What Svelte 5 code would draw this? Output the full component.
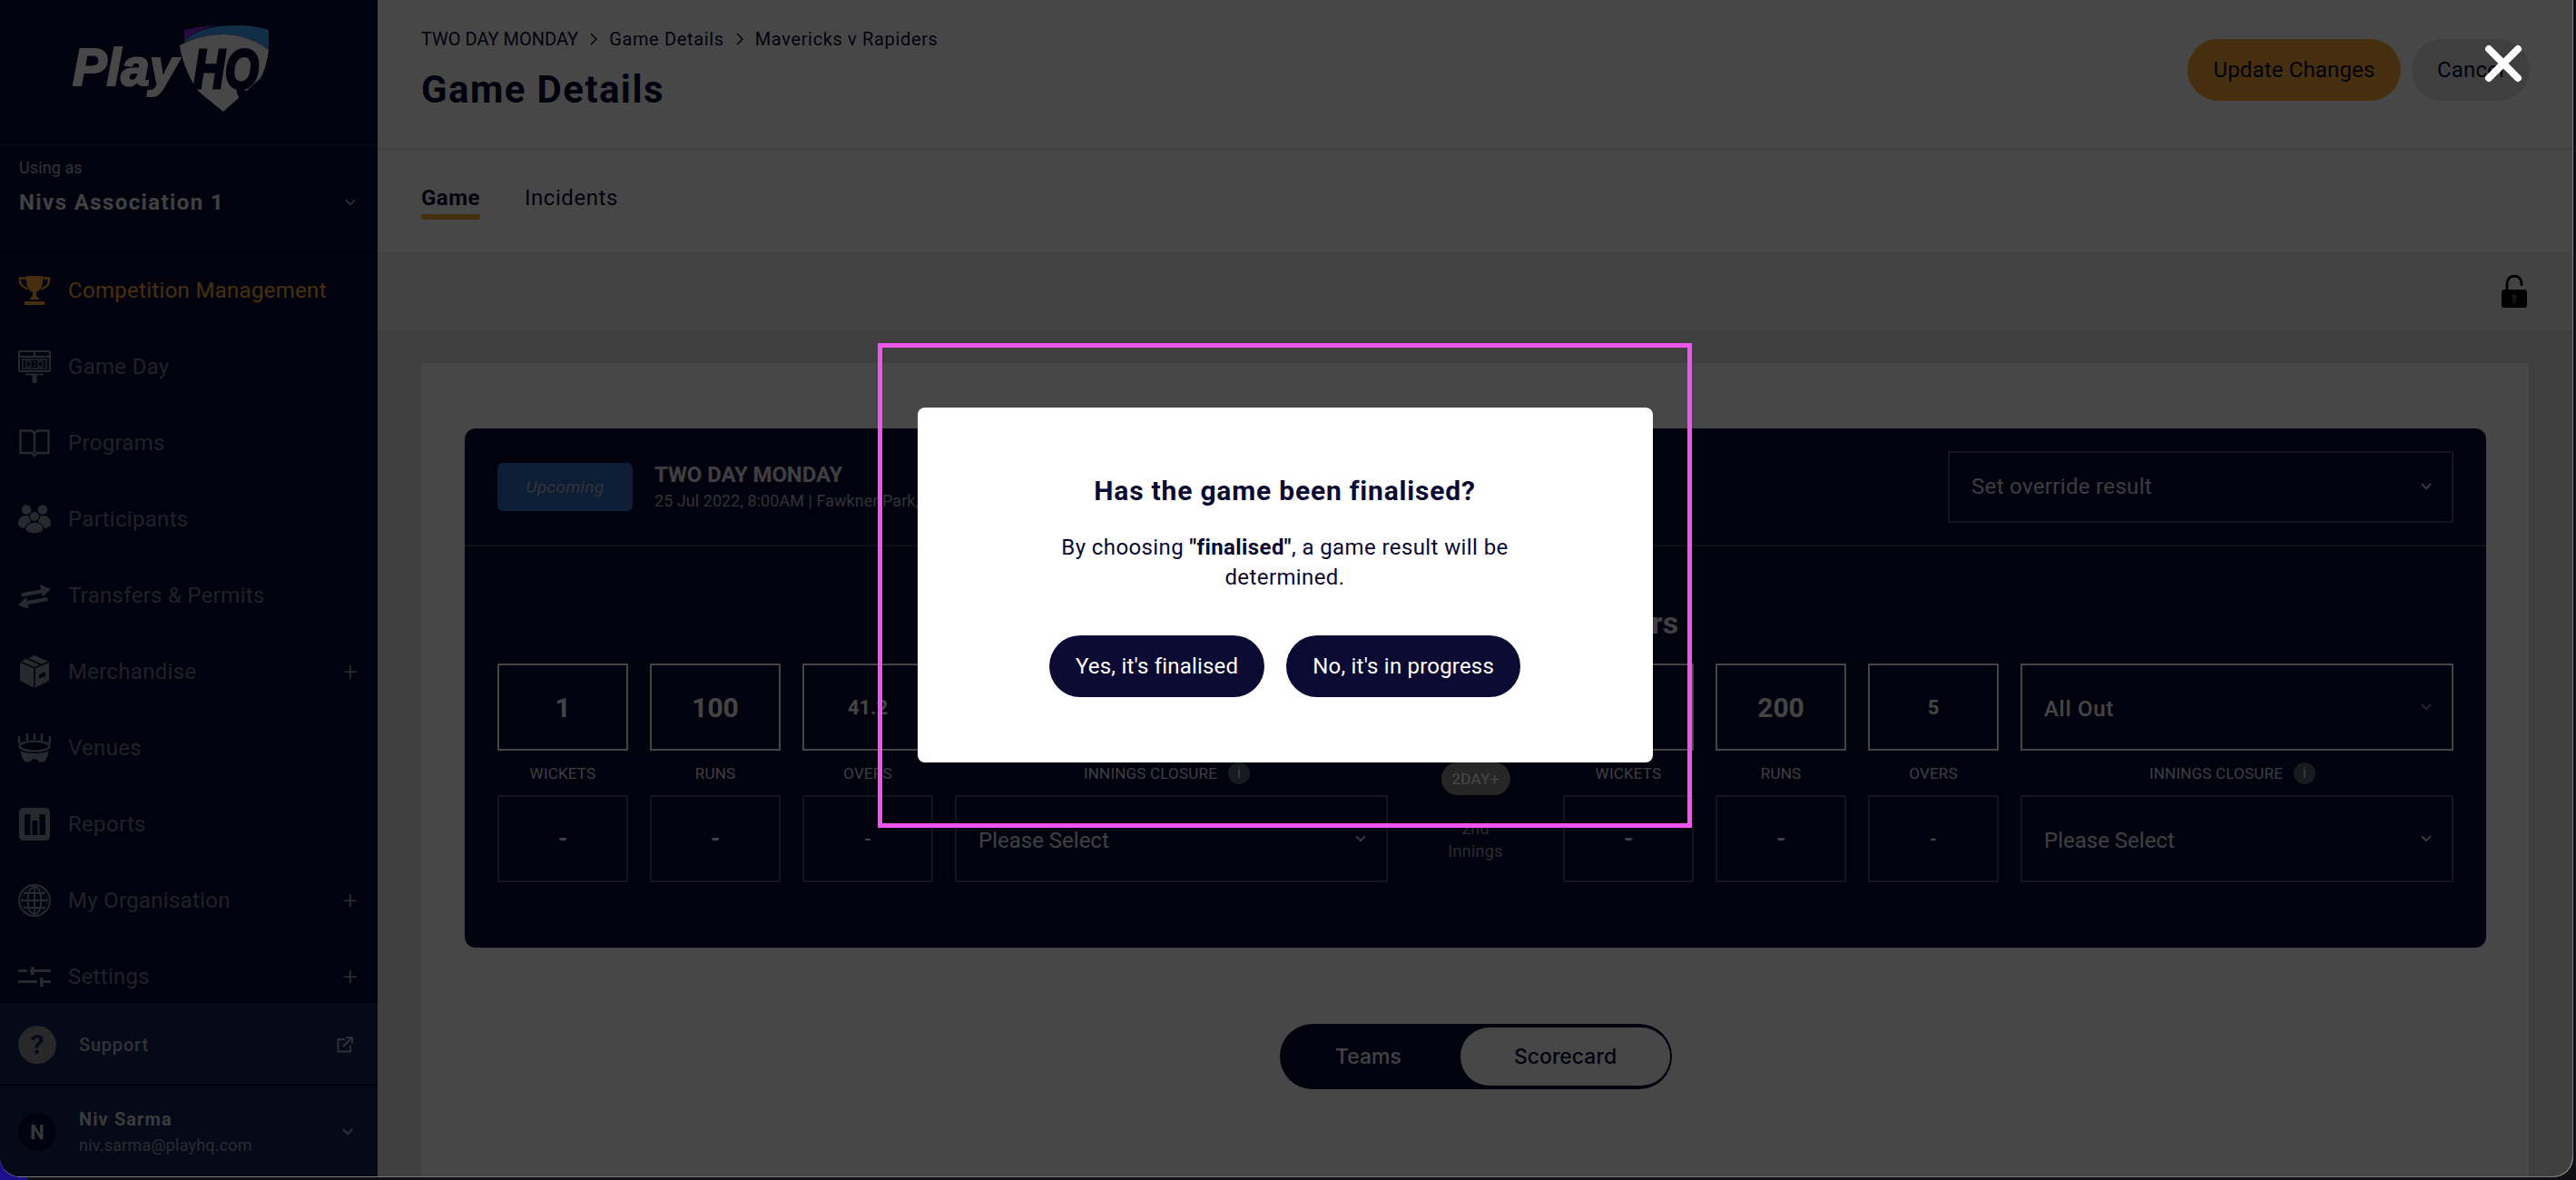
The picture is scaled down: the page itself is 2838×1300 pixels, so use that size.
<script>
const nav = [
  { name: 'Competition Management', icon: 'trophy', active: true },
  { name: 'Game Day', icon: 'board' },
  { name: 'Programs', icon: 'book' },
  { name: 'Participants', icon: 'people' },
  { name: 'Transfers & Permits', icon: 'transfer' },
  { name: 'Merchandise', icon: 'box', plus: true },
  { name: 'Venues', icon: 'stadium' },
  { name: 'Reports', icon: 'report' },
  { name: 'My Organisation', icon: 'globe', plus: true },
  { name: 'Settings', icon: 'sliders', plus: true }
];
const navy = '#0a0a33';
</script>

{#snippet chevron(cls)}
  <svg class={cls} viewBox="0 0 12 8" width="12" height="8" fill="none" stroke="currentColor" stroke-width="1.8"><path d="M1 1.2 6 6.2 11 1.2" /></svg>
{/snippet}

{#snippet icon(kind)}
  {#if kind === 'trophy'}
    <svg viewBox="0 0 36 32" width="36" height="32" fill="currentColor">
      <path d="M9 0H27V6C27 13 23 16.500 20 18V22L24 26H12L16 22V18C13 16.500 9 13 9 6Z" />
      <path d="M9 2.500H2C1 8 4 12 10.500 14.500M27 2.500H34C35 8 32 12 25.500 14.500" fill="none" stroke="currentColor" stroke-width="2.400" />
      <rect x="7" y="28" width="22" height="4" />
    </svg>
  {:else if kind === 'board'}
    <svg viewBox="0 0 36 36" width="36" height="36" fill="none" stroke="currentColor">
      <rect x="1" y="1" width="34" height="22" rx="1.500" stroke-width="2" />
      <path d="M1 7H35M18 1V7" stroke-width="2" />
      <rect x="5" y="10" width="26" height="10" stroke-width="1.500" />
      <rect x="9" y="12" width="5" height="6" stroke-width="1.200" />
      <rect x="22" y="12" width="5" height="6" stroke-width="1.200" />
      <path d="M18 12.500V14M18 16V17.500" stroke-width="2" />
      <path d="M8 26.500H28" stroke-width="1.800" />
      <rect x="15.500" y="27" width="5" height="9" fill="currentColor" stroke="none" />
    </svg>
  {:else if kind === 'book'}
    <svg viewBox="0 0 36 32" width="36" height="32" fill="none" stroke="currentColor" stroke-width="2.400">
      <path d="M2.500 2.500H15L18 5L21 2.500H33.500V27H21L18 30L15 27H2.500ZM18 5V27" />
    </svg>
  {:else if kind === 'people'}
    <svg viewBox="0 0 36 32" width="36" height="32" fill="currentColor">
      <circle cx="9" cy="5.500" r="5.300" />
      <circle cx="27" cy="5.500" r="5.300" />
      <path d="M0 21C0 15 4 12 9 12C12 12 14 13 15 15L10 26C4 26 0 24 0 21Z" />
      <path d="M36 21C36 15 32 12 27 12C24 12 22 13 21 15L26 26C32 26 36 24 36 21Z" />
      <circle cx="18" cy="13" r="5.600" stroke={navy} stroke-width="1.200" />
      <path d="M8 27C8 22 12 19.500 18 19.500C24 19.500 28 22 28 27C28 30 23 32 18 32C13 32 8 30 8 27Z" stroke={navy} stroke-width="1.200" />
    </svg>
  {:else if kind === 'transfer'}
    <svg viewBox="0 0 36 28" width="36" height="28" fill="currentColor">
      <path d="M3 11.500 25 7.500 24 2 36 7 27 15.500 26 11.500 4 15.500Z" />
      <path d="M33 16.500 11 20.500 12 26 0 21 9 12.500 10 16.500 32 12.500Z" transform="translate(0 3.500)" />
    </svg>
  {:else if kind === 'box'}
    <svg viewBox="0 0 36 36" width="36" height="36" fill="currentColor">
      <path d="M18 0 34 7V28L18 36 2 28V7Z" />
      <path d="M2 7 18 14 34 7M18 14V36M10 3.500 26 10.500" fill="none" stroke={navy} stroke-width="1.600" />
      <path d="M23 26 30 22.500V18L23 21.500Z" fill={navy} />
    </svg>
  {:else if kind === 'stadium'}
    <svg viewBox="0 0 36 32" width="36" height="32" fill="currentColor">
      <path d="M1 3V11M10 0V8M18 0V7M26 0V8M35 3V11" stroke="currentColor" stroke-width="2.400" />
      <ellipse cx="18" cy="14" rx="16.500" ry="5.500" fill="none" stroke="currentColor" stroke-width="2.200" />
      <path d="M2.500 19C7 23 29 23 33.500 19 33 24 31 30 28 31.500H23C22 27 14 27 13 31.500H8C5 30 3 24 2.500 19Z" />
    </svg>
  {:else if kind === 'report'}
    <svg viewBox="0 0 36 36" width="36" height="36" fill="currentColor">
      <rect x="1" y="0" width="34" height="36" rx="5" />
      <path d="M7 7H13.500V30H7ZM15.500 14H21.500V30H15.500ZM23.500 7H30V30H23.500Z" fill={navy} />
    </svg>
  {:else if kind === 'globe'}
    <svg viewBox="0 0 36 36" width="36" height="36" fill="none" stroke="currentColor" stroke-width="1.900">
      <circle cx="18" cy="18" r="17" />
      <ellipse cx="18" cy="18" rx="7.500" ry="15" />
      <path d="M18 3V33M3 18H33M6 10H30M6 26H30" />
      <circle cx="18" cy="18" r="13.800" stroke-width="1.200" opacity="0.500" />
    </svg>
  {:else if kind === 'sliders'}
    <svg viewBox="0 0 36 22" width="36" height="22" fill="currentColor">
      <rect x="0" y="3" width="10" height="3" />
      <rect x="13" y="3" width="23" height="3" />
      <rect x="14" y="0" width="3.500" height="9" />
      <rect x="0" y="15" width="21" height="3" />
      <rect x="25" y="15" width="11" height="3" />
      <rect x="24" y="12" width="3.500" height="10" />
    </svg>
  {/if}
{/snippet}

{#snippet side(vals, closure)}
  <div class="side">
    <div class="box strong big">{vals[0]}</div>
    <div class="box strong big">{vals[1]}</div>
    <div class="box strong mid">{vals[2]}</div>
    <div class="sel strong-sel"><span class="allout">{closure}</span>{@render chevron('chev dim')}</div>
    <div class="lab">WICKETS</div>
    <div class="lab">RUNS</div>
    <div class="lab">OVERS</div>
    <div class="lab closure">INNINGS CLOSURE <span class="info">i</span></div>
    <div class="box faint">-</div>
    <div class="box faint">-</div>
    <div class="box faint small">-</div>
    <div class="sel faint-sel"><span>Please Select</span>{@render chevron('chev')}</div>
  </div>
{/snippet}

<div class="window">
  <aside class="sidebar">
    <div class="logo">
      <svg viewBox="0 0 250 120" width="250" height="120">
        <path d="M143 18C155 15 170 13 182 13 165 14 152 22 143 30Z" fill="#8a2be0" />
        <path d="M143 30C155 20 170 13 200 13 215 13 228 15 236 18V40C222 30 205 23 187 23 170 23 155 26 143 32Z" fill="#3fa3ff" />
        <path d="M138 35C155 26 170 23 187 23 205 23 222 30 236 40 234 55 230 68 226 72L215 82 186 108 160 87C150 75 141 55 138 35Z" fill="#fff" />
        <text class="lg" x="20" y="79" font-size="58" textLength="116" lengthAdjust="spacingAndGlyphs" fill="#fff">Play</text>
        <text class="lg hq" x="153" y="82" font-size="62" textLength="72" lengthAdjust="spacingAndGlyphs" fill={navy}>HQ</text>
      </svg>
    </div>
    <div class="org">
      <div class="using">Using as</div>
      <div class="orgname"><span>Nivs Association 1</span>{@render chevron('')}</div>
    </div>
    <nav class="nav">
      {#each nav as item}
        <div class="item" class:active={item.active}>
          <span class="ic">{@render icon(item.icon)}</span>
          <span class="lbl">{item.name}</span>
          {#if item.plus}<span class="plus">+</span>{/if}
        </div>
      {/each}
    </nav>
    <div class="support">
      <span class="qm">?</span>
      <span class="sup">Support</span>
      <svg class="ext" viewBox="0 0 18 18" width="18" height="18" fill="none" stroke="currentColor" stroke-width="1.800"><path d="M9 3H1.500V16.500H15V9.500M7 11 16.500 1.500M10.500 1H17V7.500" /></svg>
    </div>
    <div class="user">
      <span class="avatar">N</span>
      <div class="who">
        <div class="uname">Niv Sarma</div>
        <div class="mail">niv.sarma@playhq.com</div>
      </div>
      {@render chevron('uchev')}
    </div>
  </aside>

  <main class="main">
    <header class="head">
      <div>
        <div class="crumbs">
          <span class="caps">TWO DAY MONDAY</span>
          <svg viewBox="0 0 8 14" width="8" height="14" fill="none" stroke="currentColor" stroke-width="1.500"><path d="M1 1 7 7 1 13" /></svg>
          <span>Game Details</span>
          <svg viewBox="0 0 8 14" width="8" height="14" fill="none" stroke="currentColor" stroke-width="1.500"><path d="M1 1 7 7 1 13" /></svg>
          <span>Mavericks v Rapiders</span>
        </div>
        <h1>Game Details</h1>
      </div>
      <div class="actions">
        <button class="update">Update Changes</button>
        <button class="cancel">Cancel</button>
      </div>
    </header>
    <div class="tabs">
      <div class="tab on">Game</div>
      <div class="tab">Incidents</div>
    </div>
    <div class="toolbar">
      <svg viewBox="0 0 28 36" width="28" height="36">
        <path d="M6 17V9A8 8 0 0 1 22 9V12" fill="none" stroke="#000" stroke-width="2.800" />
        <rect x="0" y="16" width="28" height="20" rx="3" fill="#000" />
        <circle cx="14" cy="24" r="3" fill="#4a4a4a" />
        <path d="M12.800 25H15.200L16 31H12Z" fill="#4a4a4a" />
      </svg>
    </div>
    <div class="content">
      <section class="card">
        <div class="panel">
          <div class="phead">
            <div class="badge">Upcoming</div>
            <div class="pinfo">
              <div class="ptitle">TWO DAY MONDAY</div>
              <div class="psub">25 Jul 2022, 8:00AM | Fawkner Park, Court 1</div>
            </div>
            <div class="sel override"><span>Set override result</span>{@render chevron('chev')}</div>
          </div>
          <div class="pbody">
            <h2>Mavericks v Rapiders</h2>
            <div class="scores">
              {@render side(['1', '100', '41.2'], 'All Out')}
              <div class="mid-col">
                <div class="inn">1st<br />Innings</div>
                <div class="pillrow"><span class="pill">2DAY+</span></div>
                <div class="inn two">2nd<br />Innings</div>
              </div>
              {@render side(['3', '200', '5'], 'All Out')}
            </div>
          </div>
        </div>
        <div class="toggle">
          <div class="seg">Teams</div>
          <div class="seg sel-seg">Scorecard</div>
        </div>
      </section>
    </div>
  </main>

  <div class="overlay">
    <div class="modal">
      <div class="mtitle">Has the game been finalised?</div>
      <p class="mbody">By choosing <b>"finalised"</b>, a game result will be determined.</p>
      <div class="mbtns">
        <button class="mbtn">Yes, it's finalised</button>
        <button class="mbtn">No, it's in progress</button>
      </div>
    </div>
    <div class="mark"></div>
    <svg class="close" viewBox="0 0 44 44" width="44" height="44" fill="none" stroke="#fff" stroke-width="8" stroke-linecap="round"><path d="M6 6 38 38M38 6 6 38" /></svg>
  </div>
</div>

<style>
:global(body){margin:0;background:#101014;font-family:Roboto,"Liberation Sans",sans-serif;color:#0a0a33;overflow:hidden}
:global(#app){position:relative;width:2838px;height:1300px;background:linear-gradient(90deg,#1c0f8c 0 30px,#101014 30px)}
*{box-sizing:border-box}
.window{position:relative;display:flex;width:2835px;height:1297px;overflow:hidden;border-radius:0 0 22px 22px;background:#e3e3e3;border-right:1px solid #7a7a7a;border-bottom:1px solid #7a7a7a}
.sidebar{width:416px;flex:none;height:100%;display:flex;flex-direction:column;background:#0a0a33;color:#747490}
.logo{height:160px;padding:15px 0 0 60px;border-bottom:2px solid #1b1b42}
.logo svg{display:block}
.lg{font-family:"Liberation Sans",sans-serif;font-weight:700;font-style:italic;stroke:#fff;stroke-width:2.200}
.hq{stroke:#0a0a33;stroke-width:3}
.org{height:116px;padding:13px 24px 0 21px;border-bottom:2px solid #17173c}
.using{font-size:18px;letter-spacing:.1px;line-height:24px;color:#b5b5c2}
.orgname{display:flex;justify-content:space-between;align-items:center;font-size:24px;font-weight:700;letter-spacing:1.400px;line-height:38px;margin-top:7px;color:#e6e6e6}
.orgname svg{color:#a8a8a8}
.nav{flex:1;min-height:0;overflow:hidden;padding-top:2px}
.item{display:flex;align-items:center;height:84px;padding:0 24px 0 20px;font-size:24px;letter-spacing:.3px}
.ic{width:36px;height:36px;flex:none;margin-right:19px;display:flex;align-items:center;justify-content:center;color:#8f8faa}
.ic svg{display:block}
.active{color:#f8aa38}
.active .ic{color:#f8aa38}
.plus{margin-left:auto;font-size:28px;font-weight:300;color:#9d9da6;width:12px;display:flex;justify-content:center}
.support,.user{display:flex;align-items:center;background:#172157;flex:none;padding:0 27px 0 20px}
.support{height:91px;border-bottom:2px solid #0a0a33;color:#b5b5c2;padding-top:2px}
.user{height:100px;color:#b5b5c2;padding-top:2px}
.qm{width:42px;height:42px;border-radius:50%;background:#8f8f9c;color:#172157;font-weight:700;font-size:30px;display:flex;align-items:center;justify-content:center;margin-right:25px}
.sup{font-size:20px;font-weight:500;letter-spacing:.8px}
.ext{margin-left:auto}
.avatar{width:42px;height:42px;border-radius:50%;background:#0a0a33;font-weight:700;font-size:22px;display:flex;align-items:center;justify-content:center;margin-right:25px;color:#c4c4c4}
.who{display:flex;flex-direction:column}
.uname{font-size:20px;font-weight:700;letter-spacing:1.100px;line-height:26px;color:#cfcfcf}
.mail{font-size:18px;letter-spacing:.2px;line-height:26px;margin-top:3px;color:#9a9aa8}
.uchev{margin-left:auto;color:#bdbdbd}
.main{flex:1;min-width:0;display:flex;flex-direction:column;background:#e3e3e3}
.head{height:165px;flex:none;background:#fff;border-bottom:2px solid #e6e6e6;padding:30px 47px 0 48px;display:flex;justify-content:space-between;align-items:flex-start}
.crumbs{display:flex;align-items:center;gap:13px;font-size:20px;letter-spacing:.65px;line-height:26px}
.caps{letter-spacing:0}
h1{margin:18px 0 0;font-size:42px;font-weight:700;letter-spacing:1.400px;line-height:50px}
.actions{display:flex;gap:12px;margin-top:13px}
.actions button,.mbtn{height:68px;border:0;border-radius:34px;font:400 24px Roboto,sans-serif;letter-spacing:.15px;color:#0a0a33}
.update{width:235px;background:#f8aa38}
.cancel{width:130px;background:#e3e3e3}
.tabs{height:113px;flex:none;background:#fff;display:flex;gap:49px;padding:38px 0 0 48px}
.tab{font-size:24px;letter-spacing:.55px;line-height:30px;height:39px}
.on{font-weight:700;letter-spacing:.5px;border-bottom:6px solid #f8aa38;border-radius:0 0 3px 3px}
.toolbar{height:86px;flex:none;background:#f0f0f0;display:flex;justify-content:flex-end;align-items:center;padding-right:50px}
.content{flex:1;min-height:0;padding:36px 48px 0;background:#e3e3e3}
.card{background:#fff;height:100%;padding:72px 47px 0 48px}
.panel{height:572px;background:#0a0a33;border-radius:12px;color:#e0e0e8}
.phead{height:130px;display:flex;align-items:center;padding:0 36px;border-bottom:2px solid #3a3a5c}
.badge{width:149px;height:53px;border-radius:6px;background:#2b6bbd;color:#b9b9c4;font-style:italic;font-size:19px;letter-spacing:.3px;display:flex;align-items:center;justify-content:center}
.pinfo{margin-left:24px}
.ptitle{font-size:24px;font-weight:700;letter-spacing:-.1px;line-height:30px;margin-bottom:1px}
.psub{font-size:18px;letter-spacing:.05px;line-height:26px;color:#b0b0bc}
.sel{display:flex;align-items:center;justify-content:space-between;padding:0 22px 0 24px;font-size:24px;color:#d8d8e2;border:2px solid #4d4d70}
.sel span{padding-top:3px}
.override{margin-left:auto;width:557px;height:79px;letter-spacing:.33px}
.override span{padding-top:0}
.chev{color:#e0e0e8}
.chev.dim{color:#8b8b9e}
.pbody{padding:64px 36px 0}
h2{margin:0 0 25px;text-align:center;font-size:34px;font-weight:700;line-height:40px;word-spacing:60px;color:#e0e0e8}
.scores{display:grid;grid-template-columns:1fr 193px 1fr}
.side{display:grid;grid-template-columns:repeat(3,144px) 1fr;grid-template-rows:96px 49px 96px;column-gap:24px}
.box{display:flex;align-items:center;justify-content:center;font-weight:700}
.strong{border:2px solid #f4f4f4;color:#f4f4f4}
.big{font-size:30px}
.mid{font-size:22px}
.faint{border:2px solid #4d4d70;font-size:26px;color:#e8e8f0}
.small{font-size:20px}
.strong-sel{border-color:#f4f4f4}
.allout{font-weight:500;letter-spacing:.7px;color:#f4f4f4}
.faint-sel{color:#e0e0e8}
.lab{display:flex;align-items:center;justify-content:center;gap:12px;font-size:17px;letter-spacing:.2px;color:#dcdce6}
.closure{padding-right:10px}
.info{width:24px;height:24px;border-radius:50%;background:#5c5c72;color:#dcdce6;display:flex;align-items:center;justify-content:center;font-size:16px}
.mid-col{display:grid;grid-template-rows:96px 49px 96px;justify-items:center;text-align:center;font-size:18px;letter-spacing:.3px;line-height:25px;color:#9a9aa8}
.inn{align-self:center}
.two{align-self:start;margin-top:24px}
.pillrow{align-self:end}
.pill{display:flex;align-items:center;justify-content:center;width:76px;height:36px;border-radius:18px;background:#8a8a8a;color:#fff;font-size:17px}
.toggle{display:flex;width:432px;height:72px;margin:84px 0 0 898px;padding:4px 2px 4px 4px;border-radius:36px;background:#0a0a33}
.seg{display:flex;align-items:center;justify-content:center;font:500 23px Inter,sans-serif;color:#fff}
.seg:first-child{width:195px;padding-right:8px;color:#eeeef2}
.sel-seg{width:231px;background:#fff;border-radius:32px;color:#0a0a33}
.overlay{position:absolute;inset:0;background:rgba(0,0,0,.72);display:flex;align-items:center;justify-content:center;padding:0 3px 7px 0}
.modal{width:810px;height:391px;background:#fff;border-radius:8px;padding:74px 0 0;text-align:center;color:#0a0a33}
.mtitle{font-size:30px;font-weight:700;letter-spacing:.8px;line-height:36px}
.mbody{width:560px;margin:28px auto 0;font-size:24px;letter-spacing:.4px;line-height:33px}
.mbtns{display:flex;justify-content:center;gap:24px;margin-top:47px}
.mbtn{padding:0 29px;background:#0a0a33;color:#fff;letter-spacing:.2px}
.mark{position:absolute;left:967px;top:378px;width:897px;height:534px;border:5px solid #ed55ed}
.close{position:absolute;left:2736px;top:48px}
</style>
